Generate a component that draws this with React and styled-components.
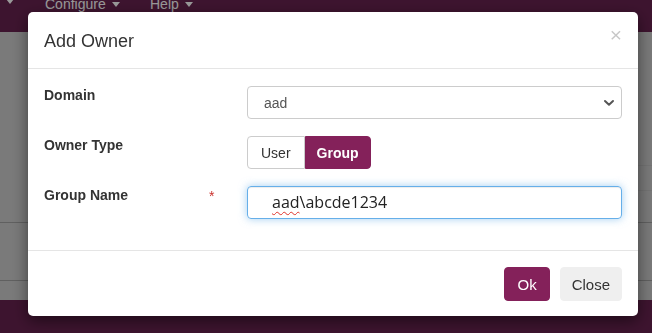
import styled, { createGlobalStyle } from "styled-components";

const GlobalStyle = createGlobalStyle`
  html, body {
    margin: 0;
    padding: 0;
    height: 100%;
    overflow: hidden;
  }
  body {
    font-family: "Liberation Sans", Arial, sans-serif;
    background: #cbcbcb;
  }
`;

const Page = styled.div`
  display: flex;
  flex-direction: column;
  height: 333px;
`;

const NavBar = styled.div`
  height: 32px;
  flex: none;
  background: #67224f;
  display: flex;
  align-items: flex-start;
  padding-left: 6px;
`;

const NavItem = styled.div`
  color: #ffffff;
  font-size: 14px;
  line-height: 10px;
  margin-top: -1px;
  width: ${(p) => p.w}px;
  flex: none;
  display: flex;
  align-items: center;
  gap: 6px;
  white-space: nowrap;
`;

const Caret = styled.span`
  display: inline-block;
  width: 0;
  height: 0;
  border-left: 4px solid transparent;
  border-right: 4px solid transparent;
  border-top: 5px solid #ffffff;
`;

const Content = styled.div`
  flex: 1;
  display: grid;
  grid-template-columns: 1fr 40px;
  background: #cbcbcb;
`;

const Column = styled.div`
  display: flex;
  flex-direction: column;
`;

const Line = styled.div`
  height: ${(p) => p.h}px;
  flex: none;
  border-bottom: 1px solid ${(p) => p.c || "#a0a0a0"};
`;

const BottomBar = styled.div`
  height: 33px;
  flex: none;
  background: #67224f;
`;

const Backdrop = styled.div`
  position: fixed;
  inset: 0;
  background: rgba(0, 0, 0, 0.4);
`;

const Modal = styled.div`
  position: fixed;
  left: 28px;
  top: 12px;
  width: 610px;
  background: #ffffff;
  border-radius: 5px;
  box-shadow: 0 5px 15px rgba(0, 0, 0, 0.5);
  display: flex;
  flex-direction: column;
  color: #333333;
`;

const Header = styled.div`
  height: 57px;
  box-sizing: border-box;
  padding: 0 16px;
  display: flex;
  align-items: center;
  justify-content: space-between;
  border-bottom: 1px solid #e5e5e5;
`;

const Title = styled.h4`
  margin: 0;
  font-size: 18px;
  font-weight: 400;
  color: #333333;
  padding-top: 2px;
`;

const CloseX = styled.button`
  border: 0;
  background: none;
  padding: 0;
  font-family: "Liberation Sans", Arial, sans-serif;
  font-size: 21px;
  font-weight: 400;
  line-height: 1;
  color: #000;
  opacity: 0.22;
  margin-top: -12px;
  margin-right: 0;
`;

const Body = styled.div`
  padding: 17px 16px 31px 16px;
  display: flex;
  flex-direction: column;
  gap: 17px;
`;

const Row = styled.div`
  display: grid;
  grid-template-columns: 203px 1fr;
  align-items: start;
`;

const Label = styled.label`
  position: relative;
  font-size: 14px;
  font-weight: 700;
  color: #333333;
  padding-top: 1px;
  line-height: 16px;
`;

const Required = styled.span`
  position: absolute;
  left: 165px;
  top: 2px;
  color: #c9302c;
  font-weight: 400;
  font-size: 14px;
`;

const Select = styled.div`
  height: 33px;
  box-sizing: border-box;
  border: 1px solid #cccccc;
  border-radius: 4px;
  display: flex;
  align-items: center;
  justify-content: space-between;
  padding: 0 6px 0 16px;
  font-size: 14px;
  color: #555555;
`;

const ToggleGroup = styled.div`
  display: flex;
`;

const Toggle = styled.button`
  height: 33px;
  box-sizing: border-box;
  padding: 0 ${(p) => (p.active ? 11 : 13)}px;
  font-family: "Liberation Sans", Arial, sans-serif;
  font-size: 14px;
  font-weight: ${(p) => (p.active ? 700 : 400)};
  border: 1px solid ${(p) => (p.active ? "#84215a" : "#cccccc")};
  background: ${(p) => (p.active ? "#84215a" : "#ffffff")};
  color: ${(p) => (p.active ? "#ffffff" : "#333333")};
  border-radius: ${(p) => (p.active ? "0 4px 4px 0" : "4px 0 0 4px")};
`;

const TextBox = styled.div`
  height: 33px;
  box-sizing: border-box;
  border: 1px solid #66afe9;
  border-radius: 4px;
  box-shadow: inset 0 1px 1px rgba(0, 0, 0, 0.075), 0 0 8px rgba(102, 175, 233, 0.6);
  display: flex;
  align-items: center;
  padding: 0 24px 2px;
  font-family: "Open Sans", "DejaVu Sans", sans-serif;
  font-size: 16px;
  color: #222222;
`;

const Misspelled = styled.span`
  text-decoration: underline wavy #e0332b;
  text-decoration-thickness: 1px;
  text-underline-offset: 3px;
`;

const Footer = styled.div`
  border-top: 1px solid #e5e5e5;
  padding: 16px 16px 15px;
  display: flex;
  justify-content: flex-end;
  gap: 10px;
`;

const Button = styled.button`
  height: 34px;
  padding: 0 ${(p) => (p.primary ? 12 : 11)}px;
  border-radius: 4px;
  border: 1px solid ${(p) => (p.primary ? "#84215a" : "#efefef")};
  background: ${(p) => (p.primary ? "#84215a" : "#efefef")};
  color: ${(p) => (p.primary ? "#ffffff" : "#333333")};
  font-family: "Liberation Sans", Arial, sans-serif;
  font-size: 15px;
`;

function Chevron() {
  return (
    <svg width="12" height="8" viewBox="0 0 12 8">
      <path d="M2 2 L6 5.8 L10 2" fill="none" stroke="#555" strokeWidth="2" strokeLinecap="round" strokeLinejoin="round" />
    </svg>
  );
}

export default function App() {
  return (
    <>
      <GlobalStyle />
      <Page>
        <NavBar>
          <NavItem w={39}><Caret /></NavItem>
          <NavItem w={105}>Configure <Caret /></NavItem>
          <NavItem w={60}>Help <Caret /></NavItem>
        </NavBar>
        <Content>
          <Column>
            <Line h={190} />
            <Line h={57} />
          </Column>
          <Column>
            <Line h={133} c="#c0c0c0" />
            <Line h={24} c="#c0c0c0" />
            <Line h={31} />
            <Line h={57} />
          </Column>
        </Content>
        <BottomBar />
      </Page>
      <Backdrop />
      <Modal>
        <Header>
          <Title>Add Owner</Title>
          <CloseX aria-label="Close">×</CloseX>
        </Header>
        <Body>
          <Row>
            <Label>Domain</Label>
            <Select>
              <span>aad</span>
              <Chevron />
            </Select>
          </Row>
          <Row>
            <Label>Owner Type</Label>
            <ToggleGroup>
              <Toggle>User</Toggle>
              <Toggle active>Group</Toggle>
            </ToggleGroup>
          </Row>
          <Row>
            <Label>
              Group Name
              <Required>*</Required>
            </Label>
            <TextBox role="textbox">
              <Misspelled>aad</Misspelled>\abcde1234
            </TextBox>
          </Row>
        </Body>
        <Footer>
          <Button primary>Ok</Button>
          <Button>Close</Button>
        </Footer>
      </Modal>
    </>
  );
}
